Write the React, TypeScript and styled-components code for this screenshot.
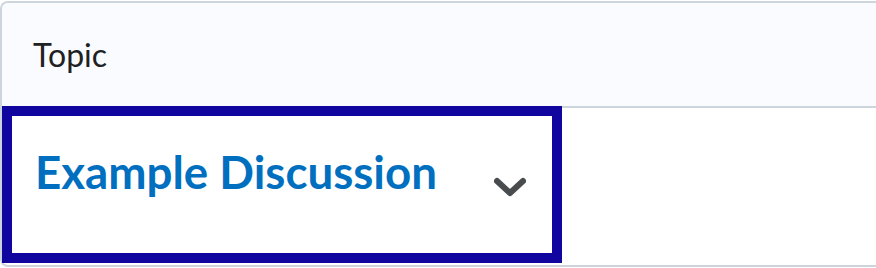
import React from "react";
import styled, { createGlobalStyle } from "styled-components";

const Global = createGlobalStyle`
  html, body { margin: 0; padding: 0; background: #ffffff; }
  body { font-family: Lato, "Noto Sans", sans-serif; overflow: hidden; }
`;

const Table = styled.div`
  margin-top: 1px;
  width: 100%;
  box-sizing: border-box;
  border: 2px solid #cdd5dc;
  border-right: none;
  border-radius: 8px 0 0 8px;
  display: flex;
  flex-direction: column;
`;

const HeaderRow = styled.div`
  height: 103px;
  background: #f9fbff;
  border-bottom: 2px solid #cdd5dc;
  border-top-left-radius: 6px;
  display: flex;
  align-items: center;
  padding-left: 31px;
`;

const HeaderText = styled.span`
  font-family: Lato, sans-serif;
  font-size: 32px;
  font-weight: 400;
  color: #202122;
`;

const BodyRow = styled.div`
  height: 157px;
  display: flex;
  align-items: flex-start;
`;

const FocusCell = styled.div`
  box-sizing: border-box;
  width: 560px;
  height: 157px;
  margin-top: -2px;
  border: 10px solid #10069f;
  display: flex;
  align-items: flex-start;
  padding: 28px 26px 0 23px;
`;

const Title = styled.span`
  font-family: Lato, sans-serif;
  font-size: 45.7px;
  font-weight: 700;
  color: #006fbf;
  line-height: normal;
`;

const Chevron = styled.svg`
  margin-left: auto;
  margin-top: 33px;
  flex: none;
`;

export default function App() {
  return (
    <>
      <Global />
      <Table>
        <HeaderRow>
          <HeaderText>Topic</HeaderText>
        </HeaderRow>
        <BodyRow>
          <FocusCell>
            <Title>Example Discussion</Title>
            <Chevron width="32" height="20" viewBox="0 0 32 20">
              <path
                d="M3 4 L16 16 L29 4"
                fill="none"
                stroke="#494c4e"
                strokeWidth="6"
                strokeLinecap="round"
                strokeLinejoin="round"
              />
            </Chevron>
          </FocusCell>
        </BodyRow>
      </Table>
    </>
  );
}
